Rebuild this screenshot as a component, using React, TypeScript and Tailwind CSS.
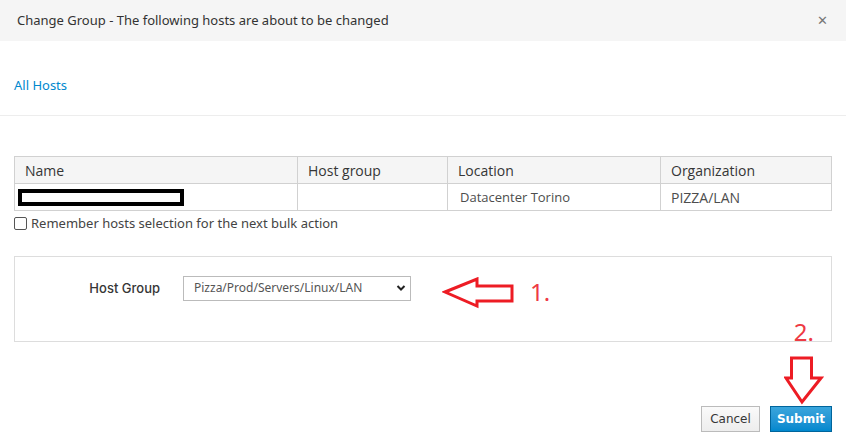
export default function App() {
  return (
    <div className="w-[846px] h-[444px] bg-white flex flex-col text-[#363636] font-['Open_Sans',sans-serif] overflow-hidden">
      <div className="h-[41px] shrink-0 bg-[#f5f5f5] flex items-center justify-between pl-[17px] pr-[18px]">
        <span className="text-[13px] text-[#333] font-['Noto_Sans',sans-serif]">
          Change Group - The following hosts are about to be changed
        </span>
        <span className="text-[13px] text-[#777] leading-none">✕</span>
      </div>

      <div className="h-[75px] shrink-0 border-b border-[#ededed] flex items-center px-[14px] pt-[16px]">
        <a className="text-[13px] text-[#0088ce] font-['Noto_Sans',sans-serif]">All Hosts</a>
      </div>

      <div className="px-[14px] pt-[40px]">
        <div className="grid grid-cols-[283px_150px_213px_171px] border-l border-t border-[#d1d1d1] text-[14px]">
          <div className="h-[27px] bg-[#f5f5f5] border-r border-b border-[#d1d1d1] px-[10px] flex items-center">Name</div>
          <div className="h-[27px] bg-[#f5f5f5] border-r border-b border-[#d1d1d1] px-[10px] flex items-center">Host group</div>
          <div className="h-[27px] bg-[#f5f5f5] border-r border-b border-[#d1d1d1] px-[10px] flex items-center">Location</div>
          <div className="h-[27px] bg-[#f5f5f5] border-r border-b border-[#d1d1d1] px-[10px] flex items-center">Organization</div>
          <div className="h-[27px] border-r border-b border-[#d1d1d1] pl-[3px] flex items-center">
            <div className="w-[166px] h-[17px] border-[4px] border-black bg-white" />
          </div>
          <div className="h-[27px] border-r border-b border-[#d1d1d1]" />
          <div className="h-[27px] border-r border-b border-[#d1d1d1] px-[12px] pt-[1px] flex items-center text-[13px] text-[#4d4d4d]">Datacenter Torino</div>
          <div className="h-[27px] border-r border-b border-[#d1d1d1] px-[10px] flex items-center text-[14px] text-[#4d4d4d]">PIZZA/LAN</div>
        </div>

        <label className="flex items-center gap-[4px] mt-[3px] text-[13px] text-[#444] font-['Noto_Sans',sans-serif]">
          <span className="w-[13px] h-[13px] border border-[#555] rounded-[2px] bg-white" />
          Remember hosts selection for the next bulk action
        </label>

        <div className="mt-[22px] h-[86px] border border-[#ddd] flex items-start pt-[19px]">
          <div className="w-[145px] text-right text-[13px] font-medium text-[#363636] font-['Inter',sans-serif] leading-[25px]">
            Host Group
          </div>
          <div className="ml-[23px] w-[228px] h-[25px] border border-[#bbb] bg-white flex items-center justify-between pl-[10px] pr-[4px]">
            <span className="text-[12px] text-[#555] font-['Noto_Sans',sans-serif]">Pizza/Prod/Servers/Linux/LAN</span>
            <svg width="10" height="8" viewBox="0 0 10 8">
              <path d="M1.5 2 L5 5.5 L8.5 2" fill="none" stroke="#222" strokeWidth="2" />
            </svg>
          </div>
          <svg width="74" height="32" viewBox="0 0 74 32" className="ml-[31px] mt-[1px]">
            <path
              d="M3 15 L35 2 L35 9 L70 9 L70 24 L35 24 L35 29 Z"
              fill="none"
              stroke="#ed1c24"
              strokeWidth="3"
              strokeLinejoin="miter"
            />
          </svg>
          <span className="ml-[14px] mt-[4px] text-[24px] leading-none text-[#ee3a43] font-['Noto_Sans',sans-serif]">1.</span>
        </div>
      </div>

      <div className="flex-1 relative px-[14px]">
        <span className="absolute right-[32px] top-[-22px] text-[24px] leading-none text-[#ee3a43] font-['Noto_Sans',sans-serif]">2.</span>
        <svg width="40" height="50" viewBox="0 0 40 50" className="absolute right-[22px] top-[14px]">
          <path
            d="M7.5 2 L27.5 2 L27.5 22 L37 22 L18 46 L2 22 L7.5 22 Z"
            fill="none"
            stroke="#ed1c24"
            strokeWidth="3"
          />
        </svg>
        <div className="absolute right-[14px] bottom-[12px] flex gap-[10px] font-['DejaVu_Sans',sans-serif] text-[12px]">
          <button className="w-[59px] h-[26px] border border-[#bbb] bg-gradient-to-b from-[#fafafa] to-[#ededed] text-[#363636]">
            Cancel
          </button>
          <button className="w-[62px] h-[26px] border border-[#00659c] bg-gradient-to-b from-[#39a5dc] to-[#0088ce] text-white font-bold">
            Submit
          </button>
        </div>
      </div>
    </div>
  );
}
